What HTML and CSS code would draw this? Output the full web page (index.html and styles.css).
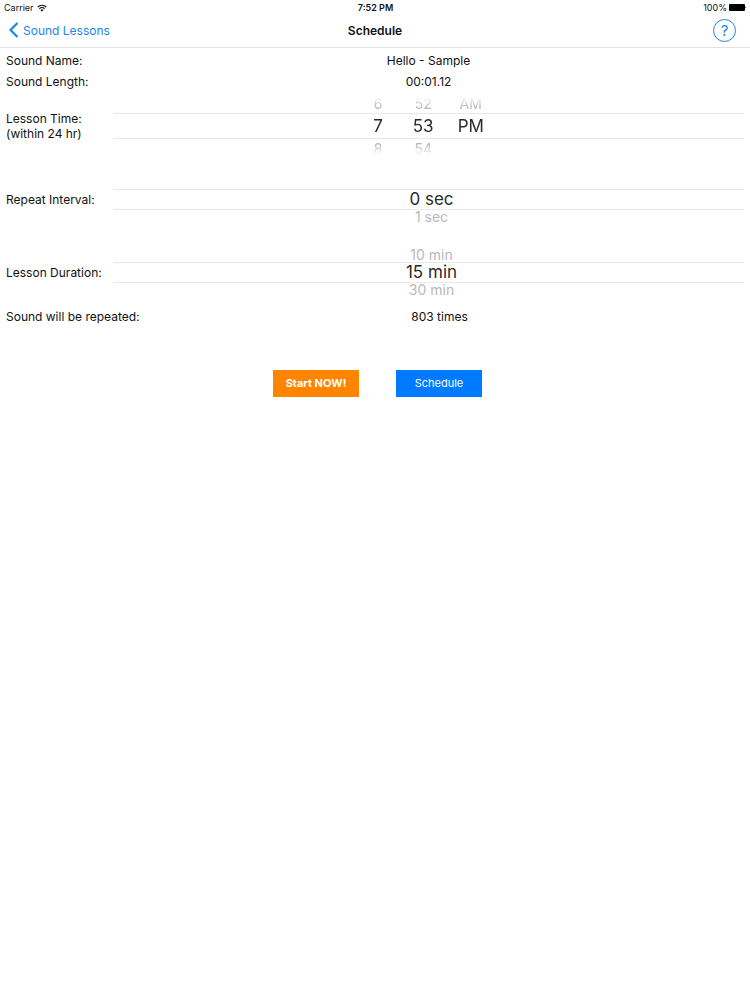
FILE: index.html
```html
<!DOCTYPE html>
<html lang="en">
<head>
<meta charset="utf-8">
<meta name="viewport" content="width=device-width, initial-scale=1">
<title>Schedule</title>
<link rel="stylesheet" href="styles.css">
</head>
<body>
<header class="top">
  <div class="status">
    <span class="carrier">Carrier
      <svg class="wifi" viewBox="0 0 20 16" aria-hidden="true"><path d="M1.500 6a12 12 0 0 1 17 0M4.800 9.500a7.400 7.400 0 0 1 10.400 0" fill="none" stroke="currentColor" stroke-width="2.400"/><path d="M10 15.500l-3-3.300a4.300 4.300 0 0 1 6 0z" fill="currentColor"/></svg>
    </span>
    <span class="clock">7:52 PM</span>
    <span class="battery">100%
      <svg class="cell" viewBox="0 0 18 7" aria-hidden="true"><rect width="16" height="7" rx="1"/><path d="M16.500 2.200q1.500 1.300 0 2.600z"/></svg>
    </span>
  </div>
  <nav class="nav">
    <a class="back" href="#"><svg class="chevron" viewBox="0 0 10 16" aria-hidden="true"><path d="M9 1L2 8l7 7" fill="none" stroke="currentColor" stroke-width="2.200"/></svg>Sound Lessons</a>
    <h1 class="title">Schedule</h1>
    <button class="help" type="button" aria-label="Help">?</button>
  </nav>
</header>
<main>
<form class="form">
  <div class="row">
    <span>Sound Name:</span>
    <output class="value">Hello - Sample</output>
  </div>
  <div class="row">
    <span>Sound Length:</span>
    <output class="value">00:01.12</output>
  </div>
  <div class="row row-time">
    <span id="time">Lesson Time:<br>(within 24 hr)</span>
    <div class="picker picker-time" role="group" aria-labelledby="time">
      <div class="wheel wheel-hour">
        <label class="option"><input type="radio" name="hour">6</label>
        <label class="option"><input type="radio" name="hour" checked>7</label>
        <label class="option"><input type="radio" name="hour">8</label>
      </div>
      <div class="wheel">
        <label class="option"><input type="radio" name="minute">52</label>
        <label class="option"><input type="radio" name="minute" checked>53</label>
        <label class="option"><input type="radio" name="minute">54</label>
      </div>
      <div class="wheel">
        <label class="option"><input type="radio" name="half">AM</label>
        <label class="option"><input type="radio" name="half" checked>PM</label>
      </div>
    </div>
  </div>
  <div class="row row-repeat">
    <span id="repeat">Repeat Interval:</span>
    <div class="picker" role="group" aria-labelledby="repeat">
      <div class="wheel">
        <span class="option"></span>
        <label class="option"><input type="radio" name="interval" checked>0 sec</label>
        <label class="option"><input type="radio" name="interval">1 sec</label>
      </div>
    </div>
  </div>
  <div class="row row-duration">
    <span id="duration">Lesson Duration:</span>
    <div class="picker" role="group" aria-labelledby="duration">
      <div class="wheel">
        <label class="option"><input type="radio" name="duration">10 min</label>
        <label class="option"><input type="radio" name="duration" checked>15 min</label>
        <label class="option"><input type="radio" name="duration">30 min</label>
      </div>
    </div>
  </div>
  <div class="row">
    <span class="wide">Sound will be repeated:</span>
    <output class="value value-times">803 times</output>
  </div>
  <div class="actions">
    <button class="action start" type="button">Start NOW!</button>
    <button class="action schedule" type="button">Schedule</button>
  </div>
</form>
</main>
</body>
</html>
```
FILE: styles.css
```css
* {
  box-sizing: border-box;
}

body {
  margin: 0;
  background: #fff;
  color: #111;
  font: 12px/15px Inter, "Liberation Sans", sans-serif;
}

button {
  padding: 0;
  font: inherit;
}

.top {
  min-height: 48px;
  border-bottom: 1px solid #e2e2e2;
}

.status,
.nav {
  display: grid;
  grid-template-columns: 1fr auto 1fr;
  align-items: center;
}

.status {
  min-height: 15px;
  padding: 0 3px 0 4px;
  font-size: 9px;
}

.carrier,
.battery {
  display: flex;
  align-items: center;
  gap: 3px;
}

.battery {
  justify-self: end;
  gap: 2px;
}

.wifi {
  width: 10px;
  height: 8px;
}

.cell {
  width: 18px;
  height: 7px;
}

.clock {
  font-weight: 600;
}

.nav {
  min-height: 32px;
  padding: 0 8px 2px;
}

.back {
  display: flex;
  align-items: center;
  gap: 4px;
  color: #1b86ee;
  text-decoration: none;
}

.chevron {
  width: 11px;
  height: 16px;
}

.title {
  margin: 0;
  font-size: 12px;
  font-weight: 600;
}

.help {
  justify-self: end;
  width: 23px;
  height: 23px;
  margin-right: 6px;
  border: 1px solid #1b86ee;
  border-radius: 50%;
  background: none;
  color: #1b86ee;
  font-size: 15px;
}

.form {
  padding: 2px 6px 0;
}

.row {
  display: grid;
  grid-template-columns: 107px 1fr;
  align-items: center;
  min-height: 21px;
}

.row-time {
  min-height: 68px;
}

.row-repeat {
  min-height: 78px;
}

.row-duration {
  min-height: 68px;
}

.wide {
  white-space: nowrap;
}

.value {
  text-align: center;
}

.value-times {
  padding-left: 22px;
}

.picker {
  display: flex;
  justify-content: center;
  padding-left: 6px;
  background: linear-gradient(#e9e9e9, #e9e9e9) 0 15px / 100% 1px no-repeat,
    linear-gradient(#e9e9e9, #e9e9e9) 0 35px / 100% 1px no-repeat;
}

.wheel {
  display: grid;
  grid-template-rows: 15px 20px 15px;
  align-items: center;
  justify-items: center;
}

.option {
  color: #b8b8bc;
  font-size: 14px;
  white-space: nowrap;
}

.option input {
  position: absolute;
  margin: 0;
  appearance: none;
}

.option:has(:checked) {
  color: #2a2a2a;
  font-size: 17px;
}

.picker-time {
  gap: 24px;
  padding-left: 0;
  background-position: 0 18px, 0 43px;
}

.picker-time .wheel {
  grid-template-rows: 17px 28px 17px;
  -webkit-mask-image: linear-gradient(transparent 2px, #000 12px, #000 50px, transparent 60px);
  mask-image: linear-gradient(transparent 2px, #000 12px, #000 50px, transparent 60px);
}

.wheel-hour {
  padding-right: 6px;
}

.actions {
  display: flex;
  justify-content: center;
  gap: 37px;
  padding: 43px 0 0 5px;
}

.action {
  width: 86px;
  height: 27px;
  border: 0;
  color: #fff;
  font-size: 11px;
}

.start {
  background: #ff8400;
  font-weight: 700;
}

.schedule {
  background: #007aff;
}
```
